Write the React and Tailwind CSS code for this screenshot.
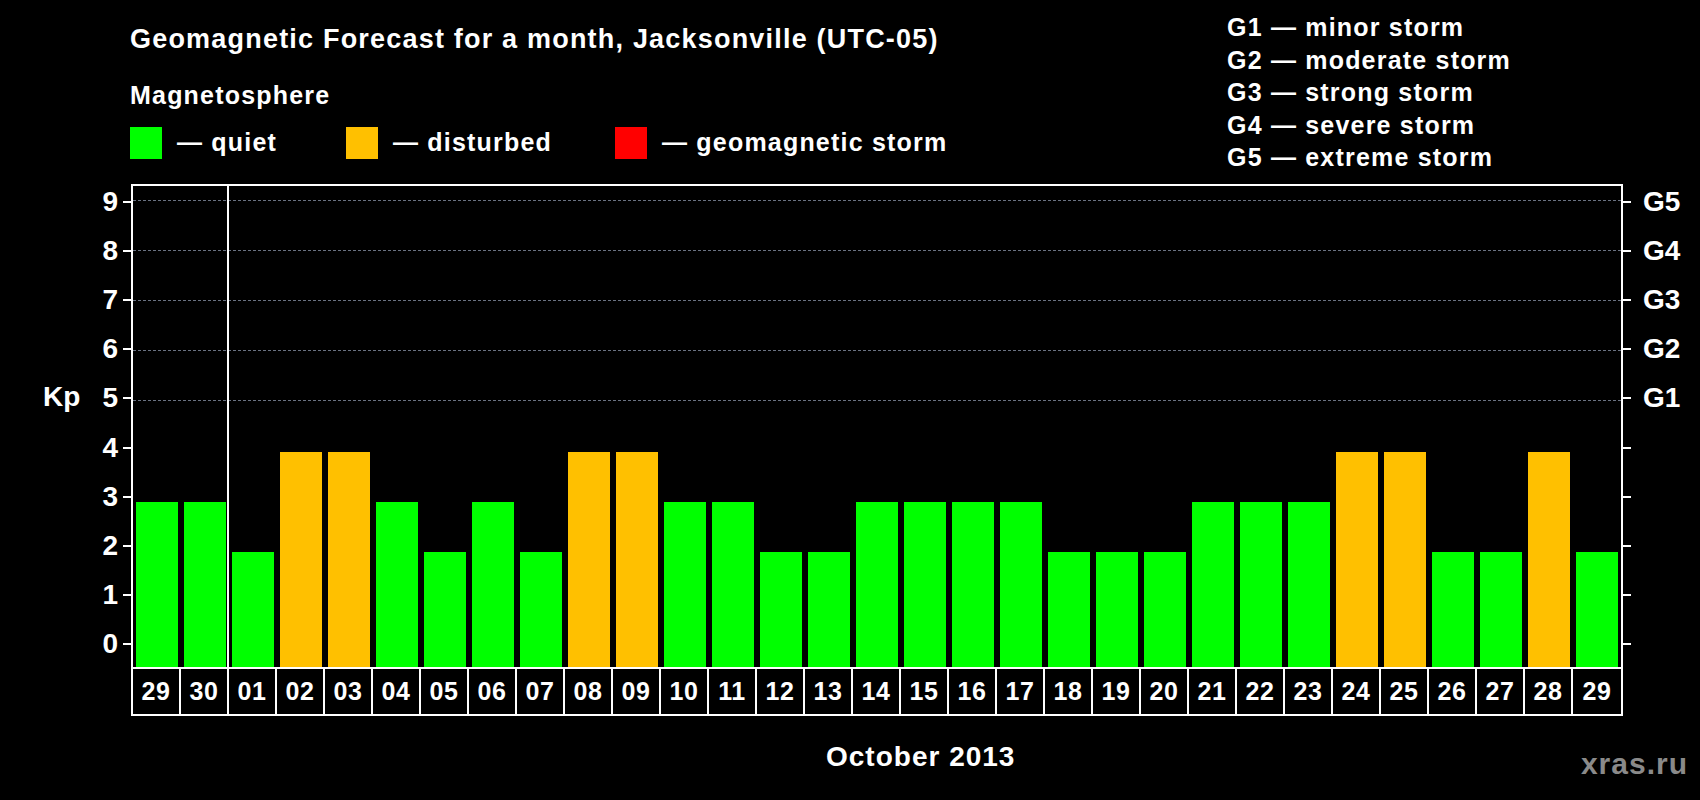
const DATA = [
  ["29", 3], ["30", 3], ["01", 2], ["02", 4], ["03", 4], ["04", 3], ["05", 2], ["06", 3],
  ["07", 2], ["08", 4], ["09", 4], ["10", 3], ["11", 3], ["12", 2], ["13", 2], ["14", 3],
  ["15", 3], ["16", 3], ["17", 3], ["18", 2], ["19", 2], ["20", 2], ["21", 3], ["22", 3],
  ["23", 3], ["24", 4], ["25", 4], ["26", 2], ["27", 2], ["28", 4], ["29", 2],
];

const LEVELS = [9, 8, 7, 6, 5, 4, 3, 2, 1, 0];
const G = { 9: "G5", 8: "G4", 7: "G3", 6: "G2", 5: "G1" };
const GRID = ["top-[14px]", "top-[64px]", "top-[114px]", "top-[164px]", "top-[214px]"];

export default function App() {
  return (
    <div
      className="w-[1700px] h-[800px] bg-black text-white font-bold relative overflow-hidden"
      style={{ fontFamily: '"Liberation Sans", Arial, sans-serif' }}
    >
      {/* header */}
      <div className="flex h-[184px]">
        <div className="ml-[130px] pt-[23px] tracking-[1.2px]">
          <div className="text-[27px] leading-[32px]">Geomagnetic Forecast for a month, Jacksonville (UTC-05)</div>
          <div className="text-[25px] leading-[30px] mt-[25px]">Magnetosphere</div>
          <div className="flex items-center mt-[14px] text-[25px]">
            <div className="flex items-center w-[216px]">
              <div className="w-[32px] h-[32px] bg-[#00ff00]" />
              <span className="ml-[15px]">— quiet</span>
            </div>
            <div className="flex items-center w-[269px]">
              <div className="w-[32px] h-[32px] bg-[#ffc000]" />
              <span className="ml-[15px]">— disturbed</span>
            </div>
            <div className="flex items-center">
              <div className="w-[32px] h-[32px] bg-[#ff0000]" />
              <span className="ml-[15px]">— geomagnetic storm</span>
            </div>
          </div>
        </div>
        <div className="ml-auto w-[473px] pt-[11px] text-[25px] leading-[32.5px] tracking-[1.2px]">
          <div>G1 — minor storm</div>
          <div>G2 — moderate storm</div>
          <div>G3 — strong storm</div>
          <div>G4 — severe storm</div>
          <div>G5 — extreme storm</div>
        </div>
      </div>

      {/* chart */}
      <div className="flex h-[485px]">
        <div className="w-[131px] flex">
          <div className="w-[64px] pt-[198px] pl-[43px] text-[28px] leading-[30px]">Kp</div>
          <div className="flex-1 flex flex-col -mt-[7px]">
            {LEVELS.map((k) => (
              <div key={k} className="h-[50px] flex items-center justify-end">
                <span className="text-[28px] mr-[5px]">{k}</span>
                <div className="w-[8px] h-[2px] bg-white" />
              </div>
            ))}
          </div>
        </div>

        <div className="w-[1492px] h-[485px] border-2 border-white relative flex items-end">
          {GRID.map((t) => (
            <div key={t} className={`absolute left-0 right-0 ${t} border-t border-dashed border-gray-500`} />
          ))}
          <div className="absolute top-0 bottom-0 left-[94px] w-[2px] bg-white" />
          {DATA.map(([d, k], i) => (
            <div key={i} className="w-[48px] flex justify-center">
              <div
                className={`w-[42px] ${k >= 4 ? "bg-[#ffc000]" : "bg-[#00ff00]"}`}
                style={{ height: 15 + 50 * k }}
              />
            </div>
          ))}
        </div>

        <div className="flex flex-col -mt-[7px]">
          {LEVELS.map((k) => (
            <div key={k} className="h-[50px] flex items-center">
              <div className="w-[8px] h-[2px] bg-white" />
              <span className="ml-[12px] text-[28px]">{G[k] || ""}</span>
            </div>
          ))}
        </div>
      </div>

      {/* dates */}
      <div className="ml-[131px] w-[1492px] h-[47px] flex border-x-2 border-b-2 border-white">
        {DATA.map(([d], i) => (
          <div
            key={i}
            className={`w-[48px] flex items-center justify-center text-[25px] tracking-[0.5px] ${i < 30 ? "border-r-2 border-white" : ""}`}
          >
            {d}
          </div>
        ))}
      </div>

      <div className="ml-[826px] mt-[20px] text-[28px] tracking-[1px]">October 2013</div>
      <div className="absolute right-[12px] bottom-[14px] text-[30px] tracking-[1px] text-[#8a8a8a]">xras.ru</div>
    </div>
  );
}
